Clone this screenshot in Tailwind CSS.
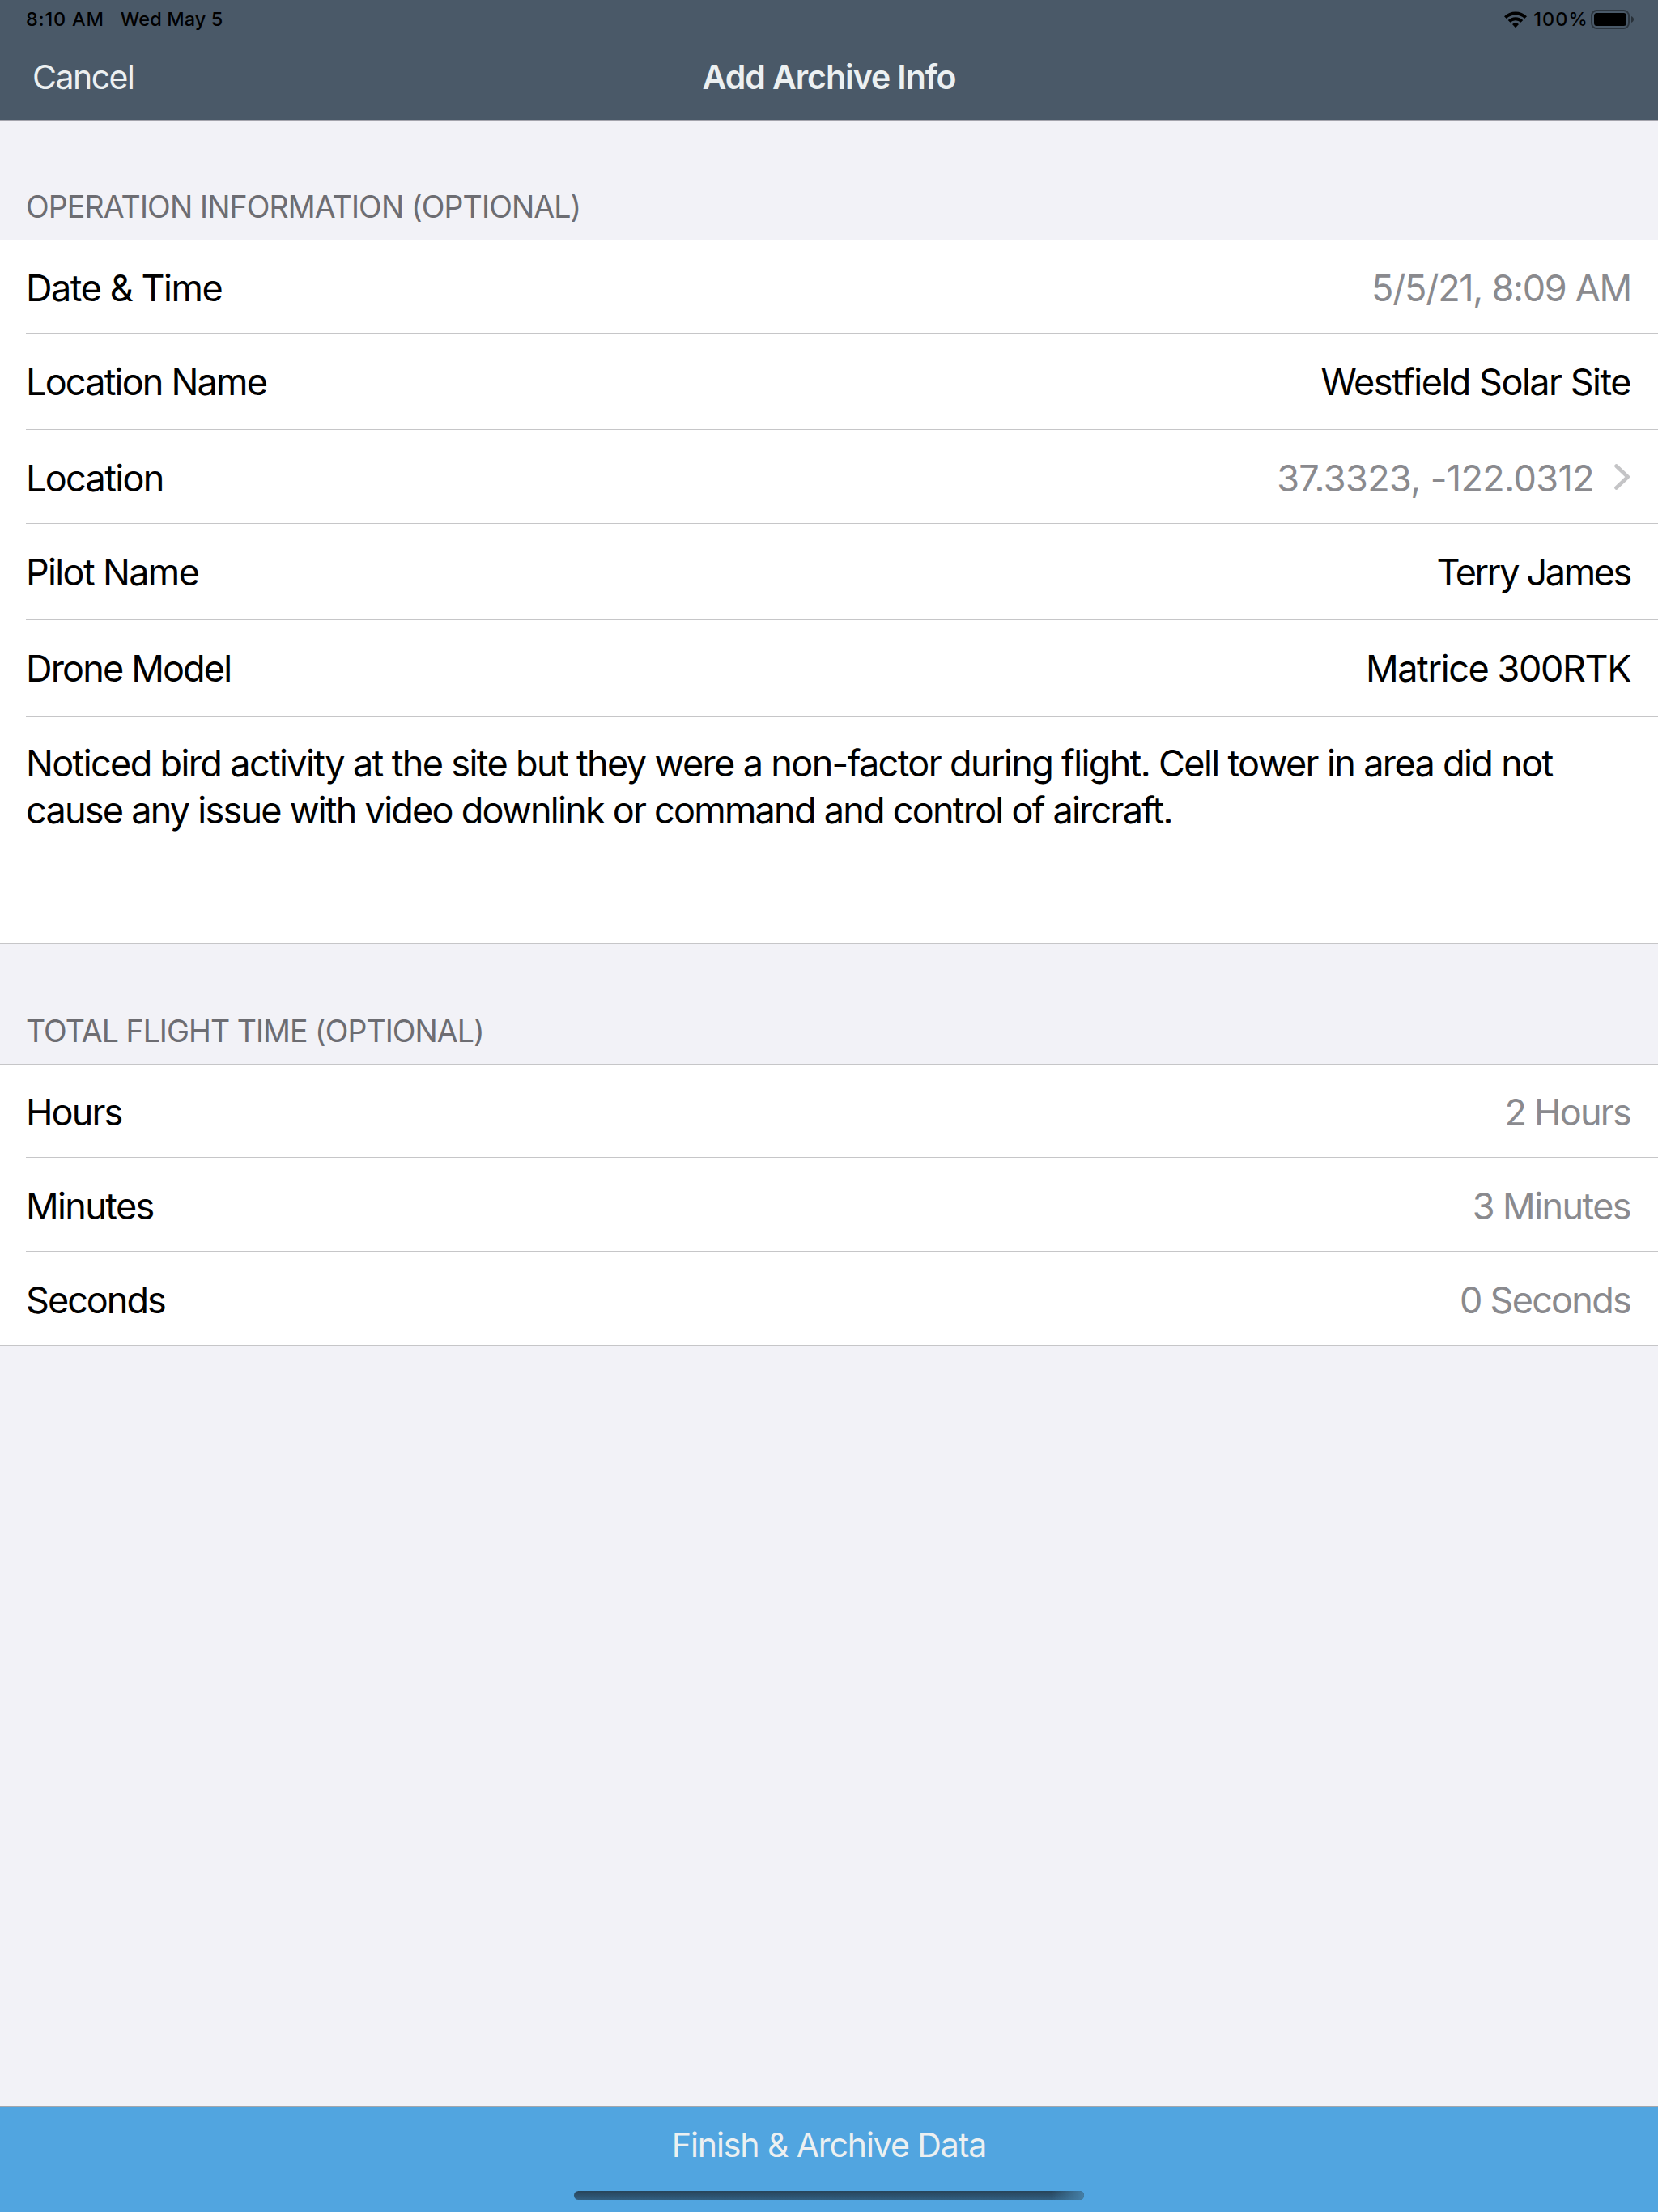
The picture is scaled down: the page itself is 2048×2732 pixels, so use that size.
<!DOCTYPE html>
<html lang="en">
<head>
<meta charset="utf-8">
<title>Add Archive Info</title>
<script src="https://cdn.jsdelivr.net/npm/@tailwindcss/browser@4"></script>
</head>
<body class="flex h-[2732px] w-[2048px] flex-col overflow-hidden bg-[#f2f2f7] font-['Inter',sans-serif] text-[45px] leading-[55px] text-black">

  <!-- Status bar and navigation bar -->
  <header class="flex h-[149px] shrink-0 flex-col border-b border-[#a5a5ad] bg-[#4a5968]">
    <div class="flex h-12 items-center justify-between pr-[30px] pl-8 text-[23.5px] leading-none font-[450]">
      <div class="flex gap-[20px]">
        <span class="tracking-[0.8px]">8:10 AM</span>
        <span class="tracking-[0.1px]">Wed May 5</span>
      </div>
      <div class="flex items-center">
        <svg class="h-[21px] w-[28px]" viewBox="0 0 28 21" fill="none" stroke="#000" stroke-width="4">
          <path d="M1.4 7.6a18 18 0 0 1 25.2 0"/>
          <path d="M6.1 12.4a11.3 11.3 0 0 1 15.8 0"/>
          <path d="M14 20.2l-4-4.2a5.7 5.7 0 0 1 8 0z" fill="#000" stroke="none"/>
        </svg>
        <span class="ml-2 tracking-[1.1px]">100%</span>
        <svg class="ml-[3px] h-6 w-[53px]" viewBox="0 0 53 24">
          <rect x="1" y="1" width="46" height="22" rx="6.5" fill="none" stroke="#000" stroke-opacity=".4" stroke-width="2"/>
          <rect x="4" y="4" width="40" height="16" rx="3.5"/>
          <path d="M50 8c4 1.600 4 6.400 0 8z" fill-opacity=".45"/>
        </svg>
      </div>
    </div>
    <div class="grid h-[94px] grid-cols-3 items-center px-10 text-[41px] leading-[50px] text-[#ecf0f1]">
      <span class="tracking-[-1.5px]">Cancel</span>
      <h1 class="text-center font-semibold tracking-[-1.06px]">Add Archive Info</h1>
    </div>
  </header>

  <main class="grow">
    <section>
      <h2 class="flex h-[147px] items-end pb-[17px] pl-8 text-[37.5px] leading-[46px] tracking-[-0.88px] text-[#6d6d72]">OPERATION INFORMATION (OPTIONAL)</h2>
      <div class="border-y border-[#c6c6c8] bg-white pl-8">
        <div class="flex h-[115px] justify-between border-b border-[#c6c6c8] pt-[31px] pr-[33px]">
          <span class="tracking-[-1.45px]">Date &amp; Time</span>
          <span class="tracking-[-1.27px] text-[#8a8a8e]">5/5/21, 8:09 AM</span>
        </div>
        <div class="flex h-[119px] justify-between border-b border-[#c6c6c8] pt-8 pr-[34px]">
          <span class="tracking-[-1.8px]">Location Name</span>
          <span class="tracking-[-1.5px]">Westfield Solar Site</span>
        </div>
        <div class="flex h-[116px] justify-between border-b border-[#c6c6c8] pt-8 pr-[34px]">
          <span class="tracking-[-1.66px]">Location</span>
          <div class="flex">
            <span class="tracking-[-0.59px] text-[#8a8a8e]">37.3323, -122.0312</span>
            <svg class="mt-[9px] ml-[25px] h-[34px] w-5" viewBox="0 0 20 34" fill="none" stroke="#c4c4c6" stroke-width="4.600" stroke-linecap="round" stroke-linejoin="round"><path d="M2.500 3.500L16.700 17L2.500 30.500"/></svg>
          </div>
        </div>
        <div class="flex h-[119px] justify-between border-b border-[#c6c6c8] pt-8 pr-[34px]">
          <span class="tracking-[-1.65px]">Pilot Name</span>
          <span class="tracking-[-2.35px]">Terry James</span>
        </div>
        <div class="flex h-[119px] justify-between border-b border-[#c6c6c8] pt-8 pr-[34px]">
          <span class="tracking-[-1.83px]">Drone Model</span>
          <span class="tracking-[-1.4px]">Matrice 300RTK</span>
        </div>
        <p class="h-[280px] pt-[29px] leading-[58px] whitespace-nowrap"><span class="tracking-[-1.633px]">Noticed bird activity at the site but they were a non-factor during flight. Cell tower in area did not</span><br><span class="tracking-[-1.754px]">cause any issue with video downlink or command and control of aircraft.</span></p>
      </div>
    </section>

    <section>
      <h2 class="flex h-[148px] items-end pb-[17px] pl-8 text-[37.5px] leading-[46px] tracking-[-0.97px] text-[#6d6d72]">TOTAL FLIGHT TIME (OPTIONAL)</h2>
      <div class="border-y border-[#c6c6c8] bg-white pl-8">
        <div class="flex h-[115px] justify-between border-b border-[#c6c6c8] pt-[31px] pr-[34px]">
          <span class="tracking-[-1.87px]">Hours</span>
          <span class="tracking-[-1.76px] text-[#8a8a8e]">2 Hours</span>
        </div>
        <div class="flex h-[116px] justify-between border-b border-[#c6c6c8] pt-8 pr-[34px]">
          <span class="tracking-[-1.63px]">Minutes</span>
          <span class="tracking-[-1.59px] text-[#8a8a8e]">3 Minutes</span>
        </div>
        <div class="flex h-[115px] justify-between pt-8 pr-[34px]">
          <span class="tracking-[-1.99px]">Seconds</span>
          <span class="tracking-[-1.75px] text-[#8a8a8e]">0 Seconds</span>
        </div>
      </div>
    </section>
  </main>

  <!-- Bottom toolbar with the home indicator -->
  <footer class="flex h-[131px] shrink-0 flex-col items-center border-t border-[#a3a7ad] bg-[#51a5e0]">
    <button class="mt-[22px] text-[41px] leading-[50px] tracking-[-1.09px] text-[#ecf0f1]">Finish &amp; Archive Data</button>
    <div class="mt-8 flex h-[11px] w-[630px] justify-end overflow-hidden rounded-full bg-linear-to-b from-[#27445a] to-[#325f80]">
      <div class="h-full w-10 bg-linear-to-r from-[#457fa6]/0 to-[#457fa6]"></div>
    </div>
  </footer>
</body>
</html>
